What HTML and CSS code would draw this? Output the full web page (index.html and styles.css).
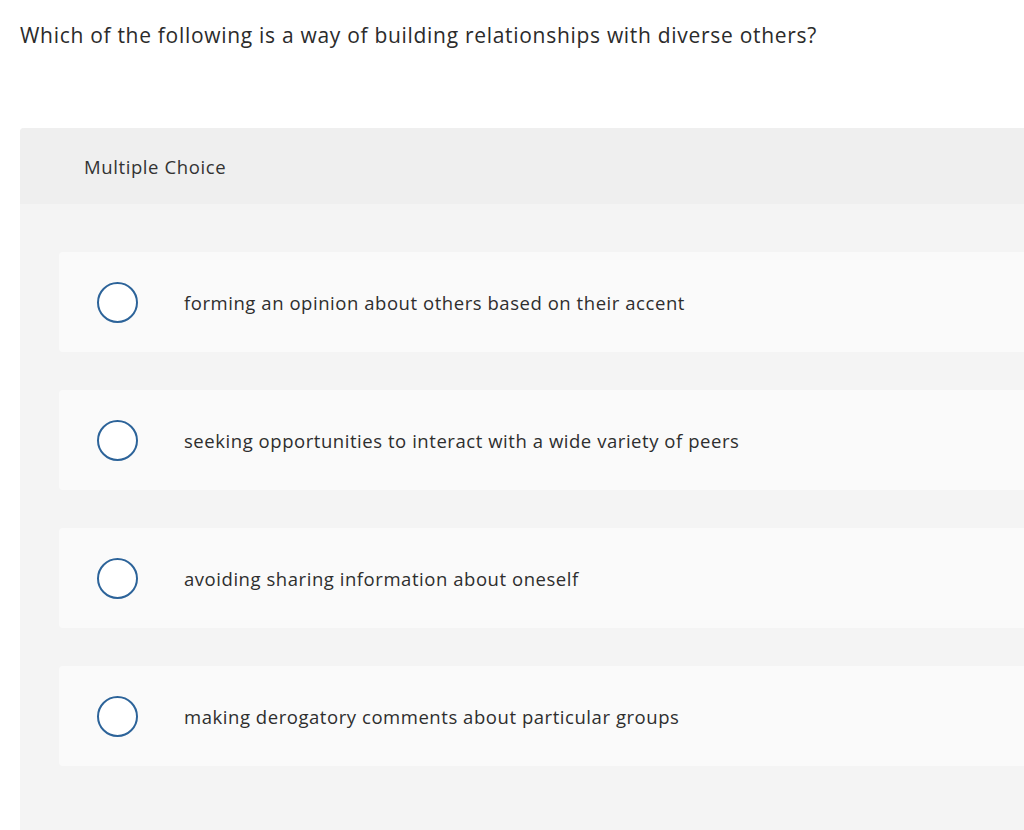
FILE: index.html
```html
<!DOCTYPE html>
<html>
<head>
<meta charset="utf-8">
<link rel="stylesheet" href="styles.css">
</head>
<body>
<div class="page">
  <p class="question">Which of the following is a way of building relationships with diverse others?</p>
  <div class="panel">
    <div class="panel-head">Multiple Choice</div>
    <div class="options">
      <div class="option"><span class="radio"></span><span class="label">forming an opinion about others based on their accent</span></div>
      <div class="option"><span class="radio"></span><span class="label">seeking opportunities to interact with a wide variety of peers</span></div>
      <div class="option"><span class="radio"></span><span class="label">avoiding sharing information about oneself</span></div>
      <div class="option"><span class="radio"></span><span class="label">making derogatory comments about particular groups</span></div>
    </div>
  </div>
</div>
</body>
</html>
```
FILE: styles.css
```css
html, body {
  margin: 0;
  padding: 0;
  background: #ffffff;
  overflow: hidden;
}
body {
  font-family: "Open Sans", "Lato", sans-serif;
  color: #333333;
}
.page {
  padding: 20px 0 0 20px;
}
.question {
  margin: 0;
  font-size: 21px;
  line-height: 30px;
  letter-spacing: 0.7px;
  color: #2b2b2b;
}
.panel {
  margin-top: 78px;
  background: #f4f4f4;
  border-radius: 4px 0 0 0;
  padding-bottom: 80px;
}
.panel-head {
  background: #efefef;
  height: 76px;
  display: flex;
  align-items: center;
  padding-left: 64px;
  font-size: 18.5px;
  letter-spacing: 0.6px;
  border-radius: 4px 0 0 0;
}
.options {
  display: flex;
  flex-direction: column;
  gap: 38px;
  padding: 48px 0 0 39px;
}
.option {
  background: #fafafa;
  height: 100px;
  border-radius: 4px 0 0 4px;
  display: flex;
  align-items: center;
  padding-left: 38px;
}
.radio {
  width: 37px;
  height: 37px;
  border: 2px solid #2c6399;
  border-radius: 50%;
  background: #ffffff;
  flex: none;
}
.label {
  margin-left: 46px;
  font-size: 18.5px;
  letter-spacing: 0.55px;
  color: #2e2e2e;
}
```
